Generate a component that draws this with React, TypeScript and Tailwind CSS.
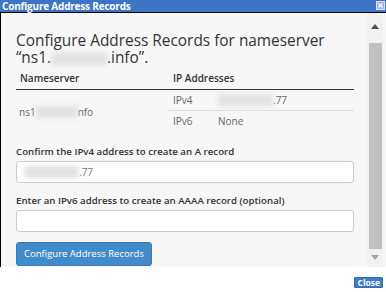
import React from "react";

function Blur({ w }: { w: number }) {
  return (
    <span
      className="inline-block h-[12px] bg-[#e2e2e2] blur-[2.5px] align-middle"
      style={{ width: w }}
    />
  );
}

export default function App() {
  return (
    <div className="w-[386px] h-[292px] bg-white overflow-hidden font-['Open_Sans',sans-serif] text-[#333]">
      {/* title bar */}
      <div className="h-[13px] bg-[#3c74c6] border-b border-black flex items-center justify-between pl-[2px] pr-[1px]">
        <span className="text-white font-bold text-[10px] leading-[12px] tracking-[-0.2px]">
          Configure Address Records
        </span>
        <svg width="9" height="9" viewBox="0 0 9 9" className="mb-[1px]">
          <rect x="0.5" y="0.5" width="8" height="8" fill="#9fb6dc" stroke="#dfe7f4" />
          <path d="M2.5 2.5 L6.5 6.5 M6.5 2.5 L2.5 6.5" stroke="#ffffff" strokeWidth="1.2" />
        </svg>
      </div>
      {/* body */}
      <div className="h-[254px] flex border-l border-black bg-[#f7f7f7]">
        <div className="flex-1 pl-[15px] pr-[13px] pt-[19px]">
          <h1 className="text-[15.4px] leading-[17px] font-normal text-[#333] whitespace-nowrap">
            Configure Address Records for nameserver
            <br />
            “ns1.<Blur w={56} />.info”.
          </h1>
          {/* table */}
          <div className="mt-[1px] text-[10px]">
            <div className="grid grid-cols-[153px_1fr] h-[23px] items-center border-b border-[#333] font-semibold text-[#333]">
              <div className="pl-[4px] pt-[1px]">Nameserver</div>
              <div className="pl-[4px] pt-[1px]">IP Addresses</div>
            </div>
            <div className="grid grid-cols-[153px_1fr] text-[#666]">
              <div className="flex items-center pl-[3px] pt-[2px]">
                ns1<Blur w={42} />nfo
              </div>
              <div>
                <div className="h-[21px] flex items-center border-b border-[#ddd]">
                  <span className="w-[49px] pl-[4px]">IPv4</span>
                  <Blur w={55} />
                  <span>.77</span>
                </div>
                <div className="h-[21px] flex items-center">
                  <span className="w-[49px] pl-[4px]">IPv6</span>
                  <span>None</span>
                </div>
              </div>
            </div>
          </div>
          {/* form */}
          <label className="block mt-[13px] text-[9.7px] leading-[14px] font-semibold text-[#333] whitespace-nowrap">
            Confirm the IPv4 address to create an A record
          </label>
          <div className="mt-[2px] h-[22px] bg-white border border-[#ccc] rounded-[3px] flex items-center pl-[7px] text-[10px] text-[#777]">
            <Blur w={55} />
            <span>.77</span>
          </div>
          <label className="block mt-[11px] text-[9.7px] leading-[14px] font-semibold text-[#333] whitespace-nowrap">
            Enter an IPv6 address to create an AAAA record (optional)
          </label>
          <div className="mt-[2px] h-[22px] bg-white border border-[#ccc] rounded-[3px]" />
          <button className="mt-[10px] h-[24px] w-[136px] bg-[#428bca] border border-[#357ebd] rounded-[3px] text-white text-[9.5px] leading-[14px] whitespace-nowrap">
            Configure Address Records
          </button>
        </div>
        {/* scrollbar */}
        <div className="w-[16px] mr-[3px] bg-[#f1f1f1] flex flex-col items-center">
          <div className="h-[25px] flex items-center justify-center pt-[2px]">
            <svg width="8" height="5" viewBox="0 0 8 5">
              <path d="M0 5 L4 0 L8 5 Z" fill="#505050" />
            </svg>
          </div>
          <div className="mt-[5px] w-[13px] h-[206px] bg-[#c1c1c1]" />
          <div className="h-[16px] flex items-center justify-center">
            <svg width="8" height="5" viewBox="0 0 8 5">
              <path d="M0 0 L8 0 L4 5 Z" fill="#a3a3a3" />
            </svg>
          </div>
        </div>
      </div>
      {/* footer */}
      <div className="flex justify-end pr-[3px] pt-[10px]">
        <button className="h-[11px] px-[2px] bg-[#3c7dcb] border border-[#2f6db8] text-white font-bold text-[8.5px] leading-[9px] rounded-[1px]">
          Close
        </button>
      </div>
    </div>
  );
}
